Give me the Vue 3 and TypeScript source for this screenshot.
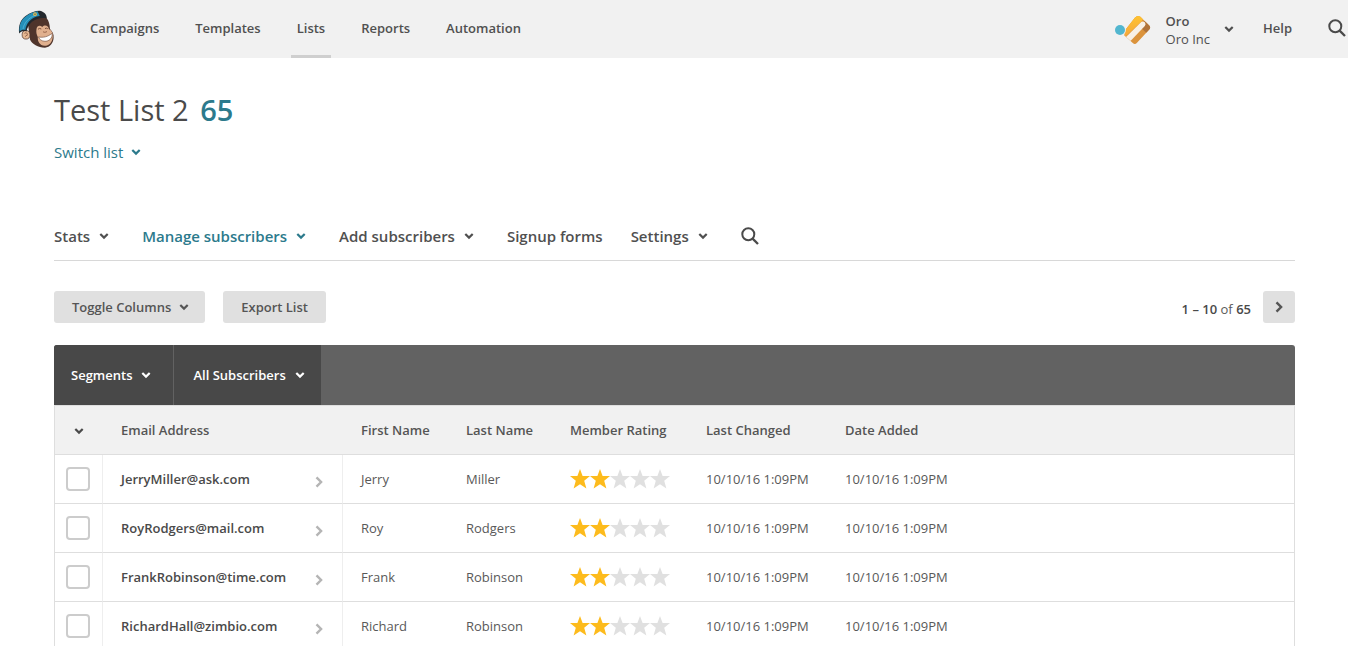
<script setup lang="ts">
interface Tab {
  label: string
  menu: boolean
}

interface Subscriber {
  email: string
  first: string
  last: string
  rating: number
  changed: string
  added: string
}

const navItems: string[] = ['Campaigns', 'Templates', 'Lists', 'Reports', 'Automation']
const activeNav = 'Lists'

const tabs: Tab[] = [
  { label: 'Stats', menu: true },
  { label: 'Manage subscribers', menu: true },
  { label: 'Add subscribers', menu: true },
  { label: 'Signup forms', menu: false },
  { label: 'Settings', menu: true },
]
const activeTab = 'Manage subscribers'

const stamp = '10/10/16 1:09PM'
const subscribers: Subscriber[] = [
  { email: 'JerryMiller@ask.com', first: 'Jerry', last: 'Miller', rating: 2, changed: stamp, added: stamp },
  { email: 'RoyRodgers@mail.com', first: 'Roy', last: 'Rodgers', rating: 2, changed: stamp, added: stamp },
  { email: 'FrankRobinson@time.com', first: 'Frank', last: 'Robinson', rating: 2, changed: stamp, added: stamp },
  { email: 'RichardHall@zimbio.com', first: 'Richard', last: 'Robinson', rating: 2, changed: stamp, added: stamp },
]
</script>

<template>
  <div class="page">
    <svg class="defs" aria-hidden="true">
      <symbol id="chev" viewBox="0 0 10 8">
        <path d="M1.3 2 5 5.6 8.7 2" fill="none" stroke="currentColor" stroke-width="2.2" />
      </symbol>
      <symbol id="next" viewBox="0 0 8 12">
        <path d="M1.5 1.3 6.1 6 1.5 10.7" fill="none" stroke="currentColor" stroke-width="2.4" />
      </symbol>
      <symbol id="search" viewBox="0 0 18 18">
        <circle cx="7.3" cy="7.3" r="6" fill="none" stroke="currentColor" stroke-width="2" />
        <path d="M11.6 11.6 17 17" fill="none" stroke="currentColor" stroke-width="2.3" />
      </symbol>
      <symbol id="star" viewBox="0 0 20 20">
        <path d="M10 0 12.6 7H20L14.2 11.8 16.4 19.6 10 15.2 3.6 19.6 5.8 11.8 0 7H7.4Z" fill="currentColor" />
      </symbol>
    </svg>

    <header class="top">
      <a class="logo" href="#" aria-label="Home">
        <svg width="36" height="38" viewBox="0 0 36 38">
          <path d="M10 14 12 29.5C14 34 20 37.7 27 37.8 32 37 35.4 33 35.6 28 36 24 34.5 21.5 32 19 31.5 14 31 11 28.5 8L19 7Z" fill="#4f342b" />
          <ellipse cx="8" cy="24.8" rx="3.9" ry="4.3" fill="#e5b893" stroke="#4b322a" stroke-width=".7" />
          <path d="M6.5 23.4C8 22 9.8 23.2 9.3 25.4M7.2 26.6 9 25" fill="none" stroke="#8a5a43" stroke-width=".9" />
          <path d="M18.5 19C19 15.5 22 14.8 24.3 17 26.5 14.4 30.6 15.5 30.8 19 33.8 20.5 35 23 34.8 26.5 34.5 32.5 31 35.8 26.5 35.8 21.8 35.3 19.5 32 19.8 27 18.5 24.5 18 22 18.5 19Z" fill="#e0b08e" />
          <path d="M20 19.2Q21.5 17.8 23.3 19M27 18.6Q28.4 17.6 29.8 18.7" fill="none" stroke="#7a4d38" stroke-width="1" />
          <path d="M25 21.8Q26.8 23 29 21.6" fill="none" stroke="#9a674d" stroke-width="1" />
          <path d="M20.5 26.9C25 28 30 26.7 34.2 23.3 34.6 28.5 31 31.3 27 31.3 23.8 31.2 21.4 29.6 20.5 26.9Z" fill="#fff" stroke="#6b4636" stroke-width=".6" />
          <path d="M1.2 23.5C.2 16 2.5 9.5 7.5 6 12 2.7 17 .7 21.5.7 26 1.4 28.6 4.2 28.9 8.4 23.5 7.2 18 8.5 14 11.8 10.8 14.8 9 18.2 8.5 21.4 5.8 20.6 3.5 21.3 1.2 23.5Z" fill="#23282d" />
          <path d="M1.6 21.5C1 15 3.2 9.8 7.8 6.5 11.5 3.8 15 1.9 19.6 1.3L21.8 6C17.5 6.4 13.5 8.4 11 11.6 8.8 14.4 7.7 17 7.4 20 5.2 19.4 3 20 1.6 21.5Z" fill="#2590b9" />
          <path d="M5 19C5.8 13.5 10 8 17 5.4" fill="none" stroke="#4aaed0" stroke-width="1" />
          <circle cx="17" cy="4.2" r="1.9" fill="#d9b75b" />
          <circle cx="17" cy="4.2" r=".7" fill="#526a4b" />
        </svg>
      </a>
      <nav class="main-nav" aria-label="Main">
        <a v-for="item in navItems" :key="item" href="#" :class="{ on: item === activeNav }">{{ item }}</a>
      </nav>
      <button class="account" type="button">
        <svg width="36" height="30" viewBox="0 0 36 30">
          <defs>
            <linearGradient id="gold" x1="0" y1="0" x2="0" y2="1">
              <stop offset="0" stop-color="#ffc431" />
              <stop offset="1" stop-color="#f4a73c" />
            </linearGradient>
            <clipPath id="card">
              <path d="M9.5 16 19.8 2.8Q22.3-.4 25.4 1.8L34 10.2Q36 12 34.5 14.2L22 27.7Q20 30 17.8 28L9.5 20.5Z" />
            </clipPath>
          </defs>
          <g clip-path="url(#card)">
            <path d="M0 0H36V30H0Z" fill="#db933c" />
            <path d="M36 8V22L25 12 29 6Z" fill="#b0733a" />
            <path d="M0 0H31L26 7 10 22H0Z" fill="url(#gold)" />
            <path d="M11 22 26.5 6.8Q28.3 5.7 30 7.5 31.2 9.3 29.8 11L15.5 26Z" fill="#f8f0e5" />
          </g>
          <circle cx="5" cy="15" r="5.9" fill="#f1f1f1" />
          <circle cx="5" cy="15" r="5" fill="#52b6cf" />
        </svg>
        <span class="who"><strong>Oro</strong><span>Oro Inc</span></span>
        <svg class="chev"><use href="#chev" /></svg>
      </button>
      <a class="help" href="#">Help</a>
      <button class="icon-btn" type="button" aria-label="Search">
        <svg class="glass"><use href="#search" /></svg>
      </button>
    </header>

    <main>
      <h1>Test List 2 <span class="count">65</span></h1>
      <button class="switch" type="button">Switch list <svg class="chev"><use href="#chev" /></svg></button>

      <nav class="tabs" aria-label="List">
        <a v-for="tab in tabs" :key="tab.label" href="#" :class="{ on: tab.label === activeTab }">
          {{ tab.label }}<svg v-if="tab.menu" class="chev"><use href="#chev" /></svg>
        </a>
        <button class="icon-btn" type="button" aria-label="Search this list">
          <svg class="glass"><use href="#search" /></svg>
        </button>
      </nav>

      <div class="tools">
        <button class="btn menu" type="button">Toggle Columns<svg class="chev"><use href="#chev" /></svg></button>
        <button class="btn" type="button">Export List</button>
        <p class="range"><b>1 – 10</b> of <b>65</b></p>
        <button class="btn next" type="button" aria-label="Next page">
          <svg class="arrow"><use href="#next" /></svg>
        </button>
      </div>

      <div class="segments">
        <button type="button">Segments<svg class="chev"><use href="#chev" /></svg></button>
        <button type="button">All Subscribers<svg class="chev"><use href="#chev" /></svg></button>
      </div>

      <table>
        <colgroup>
          <col class="c-check" /><col class="c-email" /><col class="c-first" /><col class="c-last" />
          <col class="c-rating" /><col class="c-changed" /><col />
        </colgroup>
        <thead>
          <tr>
            <th class="pick">
              <button class="icon-btn" type="button" aria-label="Select"><svg class="chev"><use href="#chev" /></svg></button>
            </th>
            <th>Email Address</th>
            <th>First Name</th>
            <th>Last Name</th>
            <th>Member Rating</th>
            <th>Last Changed</th>
            <th>Date Added</th>
          </tr>
        </thead>
        <tbody>
          <tr v-for="s in subscribers" :key="s.email">
            <td class="pick"><input type="checkbox" :aria-label="s.email" /></td>
            <td class="email">
              <a href="#">{{ s.email }}<svg class="arrow"><use href="#next" /></svg></a>
            </td>
            <td>{{ s.first }}</td>
            <td>{{ s.last }}</td>
            <td>
              <span class="stars" role="img" :aria-label="`${s.rating} of 5`">
                <svg v-for="n in 5" :key="n" :class="{ lit: n <= s.rating }"><use href="#star" /></svg>
              </span>
            </td>
            <td>{{ s.changed }}</td>
            <td>{{ s.added }}</td>
          </tr>
        </tbody>
      </table>
    </main>
  </div>
</template>

<style>
body {
  margin: 0;
  background: #fff;
}
</style>

<style scoped>
.page {
  height: 100vh;
  overflow: hidden;
  font: 400 13px/18px "Open Sans", "Noto Sans", sans-serif;
  color: #595959;
}
.page * {
  box-sizing: border-box;
}
.defs {
  position: absolute;
  width: 0;
  height: 0;
}
a {
  color: inherit;
  text-decoration: none;
}
button {
  margin: 0;
  padding: 0;
  border: 0;
  background: none;
  font: inherit;
  color: inherit;
  cursor: pointer;
}
.chev {
  flex: none;
  width: 10px;
  height: 8px;
}
.glass {
  width: 18px;
  height: 18px;
}
.arrow {
  width: 8px;
  height: 12px;
}
.icon-btn {
  display: inline-flex;
  color: #4a4a4a;
}
.top {
  display: flex;
  align-items: center;
  height: 58px;
  padding: 0 2px 0 18px;
  background: #f1f1f1;
  color: #505050;
  font-weight: 600;
}
.top > .icon-btn,
.help {
  padding-bottom: 2px;
}
.logo {
  display: flex;
  margin-right: 30px;
}
.main-nav {
  display: flex;
  gap: 24px;
  align-self: stretch;
}
.main-nav a {
  padding: 19px 6px 0;
  border-bottom: 3px solid transparent;
}
.main-nav a.on {
  border-color: #cfcfcf;
}
.account {
  display: flex;
  align-items: center;
  margin-left: auto;
  padding-top: 2px;
  text-align: left;
}
.account .chev {
  margin-bottom: 3px;
}
.who {
  display: flex;
  flex-direction: column;
  margin: 0 14px 0 15px;
  font-weight: 400;
}
.who strong {
  font-weight: 600;
}
.help {
  margin: 0 36px 0 29px;
}
main {
  padding: 31px 53px 0 54px;
}
h1 {
  margin: 0;
  font-size: 29px;
  line-height: 42px;
  font-weight: 500;
  color: #4a4a4a;
}
.count {
  margin-left: 4px;
  font-weight: 600;
  color: #2c7a8c;
}
.switch {
  display: flex;
  align-items: center;
  gap: 8px;
  margin-top: 10px;
  font-size: 15px;
  line-height: 22px;
  color: #2c7a8c;
}
.tabs {
  display: flex;
  align-items: center;
  gap: 28px;
  height: 50px;
  margin-top: 48px;
  border-bottom: 1px solid #d8d8d8;
  font-size: 15px;
  line-height: 22px;
  font-weight: 600;
  color: #505050;
}
.tabs a {
  display: flex;
  align-items: center;
}
.tabs .chev {
  margin: 0 5px 0 9px;
}
.tabs a.on {
  color: #2c7a8c;
}
.tools {
  display: flex;
  align-items: center;
  margin-top: 30px;
}
.btn {
  display: flex;
  align-items: center;
  justify-content: center;
  gap: 8px;
  height: 32px;
  margin-right: 18px;
  padding: 0 18px;
  border-radius: 3px;
  background: #e0e0e0;
  font-weight: 600;
  color: #555;
}
.btn.menu {
  padding: 0 16px 0 18px;
}
.btn.next {
  width: 32px;
  margin: 0;
  padding: 0;
}
.range {
  margin: 4px 12px 0 auto;
}
.range b {
  font-weight: 600;
  color: #4a4a4a;
}
.segments {
  display: flex;
  height: 60px;
  margin-top: 22px;
  overflow: hidden;
  border-radius: 3px 3px 0 0;
  background: #626262;
}
.segments button {
  display: flex;
  align-items: center;
  gap: 9px;
  padding: 0 22px 0 17px;
  background: #484848;
  font-weight: 600;
  color: #fff;
}
.segments button + button {
  padding: 0 16px 0 19px;
  border-left: 1px solid #626262;
}
table {
  width: 100%;
  table-layout: fixed;
  border: solid #dedede;
  border-width: 0 1px;
  border-spacing: 0;
}
.c-check {
  width: 48px;
}
.c-email {
  width: 240px;
}
.c-first {
  width: 105px;
}
.c-last {
  width: 104px;
}
.c-rating {
  width: 136px;
}
.c-changed {
  width: 139px;
}
th,
td {
  height: 49px;
  padding: 0 0 0 18px;
  border-bottom: 1px solid #dedede;
  text-align: left;
  vertical-align: middle;
}
th {
  height: 50px;
  border-top: 1px solid #dedede;
  background: #f1f1f1;
  font-weight: 600;
  color: #555;
}
.pick {
  padding: 0 1px 0 0;
  text-align: center;
}
td.pick,
td.email {
  border-right: 1px solid #eee;
}
.email a {
  display: flex;
  align-items: center;
  justify-content: space-between;
  padding-right: 19px;
  font-weight: 600;
  color: #4a4a4a;
}
.email .arrow {
  margin-top: 5px;
  color: #b5b5b5;
}
input {
  display: block;
  width: 24px;
  height: 24px;
  margin: 0 auto;
  appearance: none;
  border: 2px solid #ccc;
  border-radius: 4px;
  background: #fff;
}
.stars {
  display: flex;
}
.stars svg {
  width: 20px;
  height: 20px;
  color: #e0e0e0;
}
.stars svg.lit {
  color: #fdbb1c;
}
</style>
